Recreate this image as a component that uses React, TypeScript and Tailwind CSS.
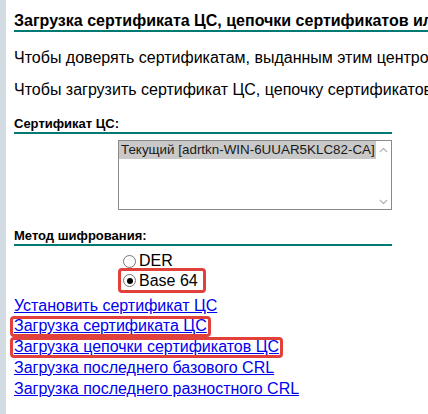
import React from "react";

const links = [
  { text: "Установить сертификат ЦС", boxed: false },
  { text: "Загрузка сертификата ЦС", boxed: true },
  { text: "Загрузка цепочки сертификатов ЦС", boxed: true },
  { text: "Загрузка последнего базового CRL", boxed: false },
  { text: "Загрузка последнего разностного CRL", boxed: false },
];

function Radio({ checked }: { checked?: boolean }) {
  return (
    <span className="inline-flex h-[13px] w-[13px] shrink-0 items-center justify-center rounded-full border border-[#767676] bg-white">
      {checked && <span className="h-[6px] w-[6px] rounded-full bg-black" />}
    </span>
  );
}

export default function App() {
  return (
    <div className="flex h-[414px] w-[428px] overflow-hidden bg-white font-['Liberation_Sans',Arial,sans-serif] text-black">
      {/* left frame edge */}
      <div className="w-[6px] shrink-0 bg-[#d3dbe3]" />

      <div className="min-w-0 flex-1 pl-2">
        <h3 className="mt-[12px] whitespace-nowrap border-b-2 border-[#007a72] text-[16px] font-bold leading-[18px]">
          Загрузка сертификата ЦС, цепочки сертификатов или CRL
        </h3>
        <p className="mt-[16px] whitespace-nowrap text-[16px] leading-[20px]">
          Чтобы доверять сертификатам, выданным этим центром сертификации
        </p>
        <p className="mt-[12px] whitespace-nowrap text-[16px] leading-[20px]">
          Чтобы загрузить сертификат ЦС, цепочку сертификатов или CRL
        </p>

        <div className="w-[378px]">
          <div className="mt-[16px] border-b-2 border-[#007a72] text-[13px] font-bold leading-[16px]">
            Сертификат ЦС:
          </div>
          <div className="ml-[104px] mt-[6px] flex h-[70px] border border-[#8a8a8a] bg-white">
            <div className="min-w-0 flex-1">
              <div className="whitespace-nowrap bg-[#c9c9c9] pl-[2px] text-[13.4px] leading-[18px] text-[#1a1a1a]">
                Текущий [adrtkn-WIN-6UUAR5KLC82-CA]
              </div>
            </div>
            <div className="flex w-[15px] flex-col items-center justify-between pb-[4px] pt-[6px] text-[#b8b8b8]">
              <svg width="9" height="6" viewBox="0 0 9 6" fill="none" stroke="currentColor" strokeWidth="1.4">
                <path d="M1 5l3.5-3.5L8 5" />
              </svg>
              <svg width="9" height="6" viewBox="0 0 9 6" fill="none" stroke="currentColor" strokeWidth="1.4">
                <path d="M1 1l3.5 3.5L8 1" />
              </svg>
            </div>
          </div>

          <div className="mt-[18px] border-b-2 border-[#007a72] text-[13px] font-bold leading-[16px]">
            Метод шифрования:
          </div>
        </div>

        <div className="ml-[104px] mt-[5px] flex flex-col text-[16px]">
          <label className="flex h-[20px] items-center gap-[3px] pl-[5px]">
            <Radio />
            <span>DER</span>
          </label>
          <label className="-mt-[3px] flex h-[25px] w-fit items-center gap-[3px] rounded-[4px] pl-[5px] pr-[8px] outline outline-[3px] -outline-offset-[3px] outline-[#e2403a]">
            <Radio checked />
            <span>Base 64</span>
          </label>
        </div>

        <div className="mt-[2.5px] flex flex-col text-[16px] leading-[20.75px]">
          {links.map((l) => (
            <a
              key={l.text}
              href="#"
              className={
                l.boxed
                  ? "-mx-[4px] w-fit rounded-[4px] px-[4px] text-[#0000ee] underline outline outline-[3px] -outline-offset-[3px] outline-[#e2403a]"
                  : "w-fit text-[#0000ee] underline"
              }
            >
              {l.text}
            </a>
          ))}
        </div>
      </div>
    </div>
  );
}
